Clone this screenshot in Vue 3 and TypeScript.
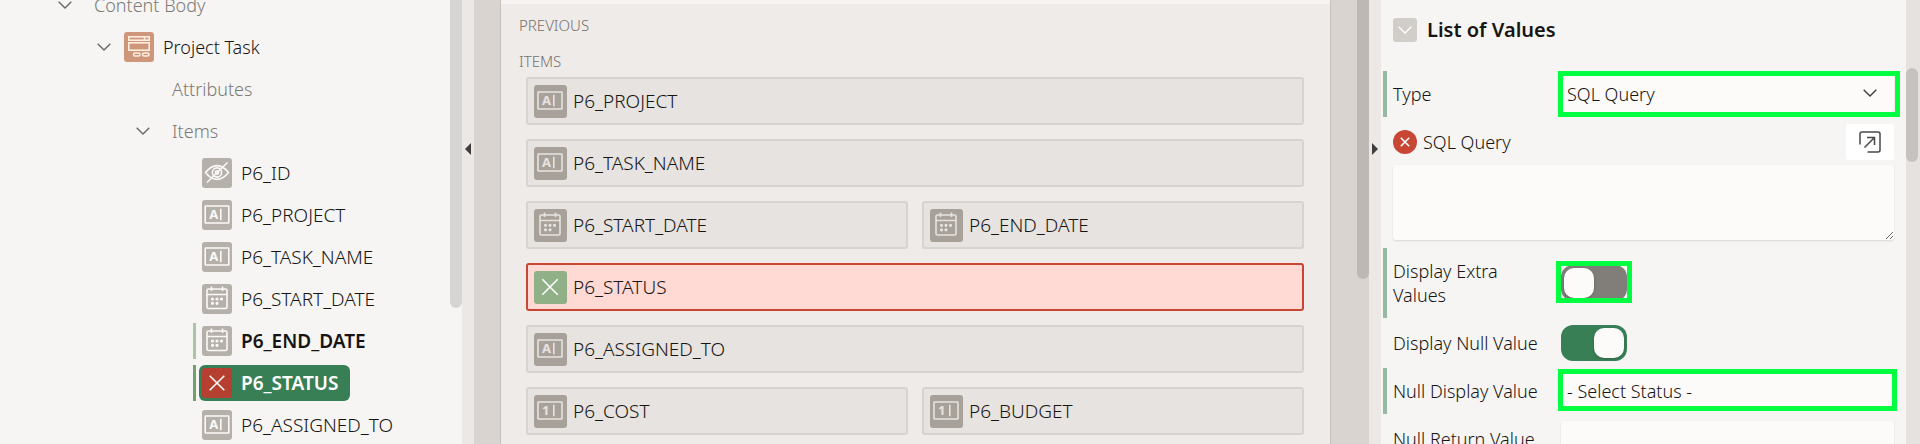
<script setup lang="ts">
import { ref } from 'vue'

type IconKind = 'region' | 'hidden' | 'text' | 'number' | 'date' | 'error'

interface TreeNode {
  label: string
  level: number
  icon?: IconKind
  open?: boolean
  changed?: boolean
  selected?: boolean
  muted?: boolean
}

interface LayoutItem {
  label: string
  icon: IconKind
  half?: boolean
  invalid?: boolean
}

const nodes: TreeNode[] = [
  { label: 'Content Body', level: 0, open: true, muted: true },
  { label: 'Project Task', level: 1, icon: 'region', open: true },
  { label: 'Attributes', level: 2, muted: true },
  { label: 'Items', level: 2, open: true, muted: true },
  { label: 'P6_ID', level: 3, icon: 'hidden' },
  { label: 'P6_PROJECT', level: 3, icon: 'text' },
  { label: 'P6_TASK_NAME', level: 3, icon: 'text' },
  { label: 'P6_START_DATE', level: 3, icon: 'date' },
  { label: 'P6_END_DATE', level: 3, icon: 'date', changed: true },
  { label: 'P6_STATUS', level: 3, icon: 'error', changed: true, selected: true },
  { label: 'P6_ASSIGNED_TO', level: 3, icon: 'text' },
]

const items: LayoutItem[] = [
  { label: 'P6_PROJECT', icon: 'text' },
  { label: 'P6_TASK_NAME', icon: 'text' },
  { label: 'P6_START_DATE', icon: 'date', half: true },
  { label: 'P6_END_DATE', icon: 'date', half: true },
  { label: 'P6_STATUS', icon: 'error', invalid: true },
  { label: 'P6_ASSIGNED_TO', icon: 'text' },
  { label: 'P6_COST', icon: 'number', half: true },
  { label: 'P6_BUDGET', icon: 'number', half: true },
]

const lovType = ref('SQL Query')
const sqlQuery = ref('')
const extraValues = ref(false)
const nullValue = ref(true)
const nullDisplay = ref('- Select Status -')
const nullReturn = ref('')
</script>

<template>
  <div class="designer">
    <nav class="pane tree-pane" aria-label="Rendering">
      <ul class="tree">
        <li
          v-for="n in nodes"
          :key="n.label"
          class="node"
          :class="[`level-${n.level}`, { muted: n.muted, changed: n.changed, selected: n.selected }]"
        >
          <span class="twist">
            <button v-if="n.open" type="button" class="twist-btn" :aria-label="`Collapse ${n.label}`">
              <svg viewBox="0 0 14 8" width="14" height="8"><path d="M.7.7 7 7 13.3.7" /></svg>
            </button>
          </span>
          <a href="#" class="entry" :class="{ plain: !n.icon }">
            <svg v-if="n.icon" class="badge" :class="n.icon" viewBox="0 0 30 30" aria-hidden="true">
              <g v-if="n.icon === 'region'" class="line">
                <rect x="4.8" y="4.8" width="20.4" height="3.4" />
                <path d="M20.5 5v3" />
                <rect x="4.8" y="10.8" width="20.4" height="7.4" />
                <rect x="9.5" y="21" width="6.5" height="3" rx="1.5" />
                <rect x="18.5" y="21" width="6.5" height="3" rx="1.5" />
              </g>
              <g v-else-if="n.icon === 'hidden'" class="line">
                <path d="M3.5 14.5Q9 7.6 15 7.6t11.5 6.9Q21 21.4 15 21.4T3.5 14.5Z" />
                <circle cx="15" cy="14.5" r="4.6" />
                <circle cx="15" cy="14.5" r="1.6" />
                <path d="M5 24.5 25.5 4.5" />
              </g>
              <g v-else-if="n.icon === 'date'" class="line">
                <rect x="5" y="5" width="20" height="19.5" rx="1.5" />
                <path d="M5 10.5h20M9.5 2.5V7M20.5 2.5V7" />
                <path class="dots" d="M10.5 15h0M15 15h0M19.5 15h0M10.5 19.3h0M15 19.3h0" />
              </g>
              <path v-else-if="n.icon === 'error'" class="line" d="M7.7 7.7 22.3 22.3M22.3 7.7 7.7 22.3" />
              <g v-else>
                <rect class="line" x="3.2" y="6" width="23.6" height="17" rx=".6" />
                <text x="7.2" y="19" class="glyph">{{ n.icon === 'number' ? '1' : 'A' }}</text>
                <path class="line" d="M18.8 8.8v11.4" />
              </g>
            </svg>
            <span>{{ n.label }}</span>
          </a>
        </li>
      </ul>
      <div class="bar"><div class="thumb"></div></div>
    </nav>

    <div class="splitter">
      <button type="button" class="collapse" aria-label="Collapse left pane">
        <svg viewBox="0 0 6 12" width="6" height="12"><path d="M6 0v12L0 6Z" /></svg>
      </button>
    </div>

    <main class="pane canvas">
      <section class="region">
        <h3 class="slot">PREVIOUS</h3>
        <h3 class="slot">ITEMS</h3>
        <div class="grid">
          <div
            v-for="i in items"
            :key="i.label"
            class="item"
            :class="{ half: i.half, invalid: i.invalid }"
          >
            <svg class="badge" :class="i.icon" viewBox="0 0 33 33" aria-hidden="true">
              <g v-if="i.icon === 'date'" class="line">
                <rect x="6" y="6" width="20" height="20" rx="1.5" />
                <path d="M6 11.5h20M10.5 3.5V8M21.5 3.5V8" />
                <path class="dots" d="M11.5 16.3h0M16 16.3h0M20.5 16.3h0M11.5 20.8h0M16 20.8h0" />
              </g>
              <path v-else-if="i.icon === 'error'" class="line" d="M8.3 8.3 23.7 23.7M23.7 8.3 8.3 23.7" />
              <g v-else>
                <rect class="line" x="4" y="7" width="24" height="17" rx=".6" />
                <text x="8" y="20" class="glyph">{{ i.icon === 'number' ? '1' : 'A' }}</text>
                <path class="line" d="M19.8 9.8v11.4" />
              </g>
            </svg>
            <span>{{ i.label }}</span>
          </div>
        </div>
      </section>
      <div class="bar"><div class="thumb"></div></div>
    </main>

    <div class="splitter">
      <button type="button" class="collapse" aria-label="Collapse right pane">
        <svg viewBox="0 0 6 12" width="6" height="12"><path d="M0 0v12l6-6Z" /></svg>
      </button>
    </div>

    <aside class="pane props">
      <form class="form" @submit.prevent>
        <header class="group">
          <button type="button" class="group-btn" aria-label="Collapse group">
            <svg viewBox="0 0 14 8" width="14" height="8"><path d="M.7.7 7 7 13.3.7" /></svg>
          </button>
          <h2>List of Values</h2>
        </header>

        <div class="row changed">
          <label for="type">Type</label>
          <div class="control marked mark-select">
            <select id="type" v-model="lovType" class="field">
              <option>SQL Query</option>
            </select>
            <svg class="arrow" viewBox="0 0 14 8" width="14" height="8" aria-hidden="true">
              <path d="M.7.7 7 7 13.3.7" />
            </svg>
          </div>
        </div>

        <div class="row">
          <svg class="alert" viewBox="0 0 24 24" width="24" height="24" aria-hidden="true">
            <circle cx="12" cy="12" r="12" />
            <path d="m7.8 7.8 8.4 8.4M16.2 7.8l-8.4 8.4" />
          </svg>
          <label for="sql" class="wide">SQL Query</label>
          <button type="button" class="expand" aria-label="Open code editor">
            <svg viewBox="0 0 22 22" width="22" height="22">
              <path d="M1 13.5V3a2 2 0 0 1 2-2h16a2 2 0 0 1 2 2v16a2 2 0 0 1-2 2H8.5M5.5 16.5 15.5 6.5M8 6.5h7.5V14" />
            </svg>
          </button>
        </div>
        <textarea id="sql" v-model="sqlQuery" class="field area"></textarea>

        <div class="row tall changed">
          <label for="extra">Display Extra Values</label>
          <div class="control marked mark-toggle">
            <input id="extra" v-model="extraValues" type="checkbox" role="switch" class="toggle" />
          </div>
        </div>

        <div class="row">
          <label for="nulls">Display Null Value</label>
          <div class="control">
            <input id="nulls" v-model="nullValue" type="checkbox" role="switch" class="toggle" />
          </div>
        </div>

        <div class="row changed">
          <label for="display">Null Display Value</label>
          <div class="control marked mark-input">
            <input id="display" v-model="nullDisplay" type="text" class="field" />
          </div>
        </div>

        <div class="row">
          <label for="return">Null Return Value</label>
          <div class="control">
            <input id="return" v-model="nullReturn" type="text" class="field" />
          </div>
        </div>
      </form>
      <div class="bar"><div class="thumb"></div></div>
    </aside>
  </div>
</template>

<style>
body {
  margin: 0;
  overflow: hidden;
}
</style>

<style scoped>
* {
  box-sizing: border-box;
}

.designer {
  display: flex;
  height: 100vh;
  overflow: hidden;
  background: #f6f5f3;
  color: #161513;
  font-family: "Noto Sans", "Open Sans", sans-serif;
  font-size: 18px;
  font-weight: 300;
  line-height: 24px;
}

button {
  padding: 0;
  border: 0;
  background: none;
  font: inherit;
}

svg {
  display: block;
  flex: none;
}

.pane {
  display: flex;
  overflow: hidden;
}

.bar {
  flex: none;
  width: 12px;
}

.thumb {
  width: 12px;
  border-radius: 6px;
  background: #d6d5d3;
}

/* Tree */
.tree-pane {
  flex: none;
  width: 462px;
}

.tree-pane .thumb {
  height: 308px;
  border-radius: 0 0 6px 6px;
}

.tree {
  flex: 1;
  margin: -16px 0 0;
  padding: 0;
  list-style: none;
}

.node {
  display: flex;
  align-items: center;
  height: 42px;
}

.level-0 { padding-left: 54px; }
.level-1 { padding-left: 93px; }
.level-2 { padding-left: 132px; }
.level-3 {
  padding-left: 171px;
  font-size: 19px;
}

.twist {
  display: flex;
  align-items: center;
  justify-content: flex-end;
  width: 25px;
  height: 36px;
  padding-right: 4px;
  border-right: 3px solid transparent;
}

.twist-btn svg,
.group-btn svg,
.arrow {
  fill: none;
  stroke: #6b6966;
  stroke-width: 1.4;
}

.changed > .twist {
  border-right-color: #a8c5a5;
}

.selected > .twist {
  border-right-color: #72a06c;
}

.entry {
  display: flex;
  align-items: center;
  gap: 9px;
  height: 36px;
  margin-left: 3px;
  padding: 0 12px 0 3px;
  border-radius: 6px;
  color: inherit;
  text-decoration: none;
}

.entry.plain {
  padding-left: 12px;
}

.muted {
  color: #7d7a77;
}

.changed .entry {
  font-weight: 600;
}

.selected .entry {
  background: #397f56;
  color: #fff;
}

.badge {
  width: 30px;
  height: 30px;
  border-radius: 3px;
  background: #b6b0ab;
}

.badge.region { background: #ce967b; }
.badge.error { background: #b53f31; }

.line {
  fill: none;
  stroke: #fbf9f8;
  stroke-width: 1.6;
}

.region > .line { stroke: #fdeedd; }

.dots {
  stroke-linecap: round;
  stroke-width: 3.2;
}

.glyph {
  fill: #fbf9f8;
  font-size: 13px;
  font-weight: 700;
}

/* Splitters */
.splitter {
  flex: none;
  width: 12px;
  padding: 143px 3px 0;
  background: #ece8e5;
}

.collapse {
  display: block;
  fill: #403e3c;
}

/* Layout canvas */
.canvas {
  flex: 1;
  min-width: 0;
  padding-left: 26px;
  background: #d9d4cf;
}

.canvas .thumb {
  height: 279px;
  border-radius: 0 0 6px 6px;
  background: #bdb8b4;
}

section.region {
  flex: 1;
  margin-right: 26px;
  padding: 7px 26px 8px 25px;
  border: solid #c6c1bc;
  border-width: 0 1px;
  background: linear-gradient(#f6f5f3 4px, #efebe8 4px);
}

.slot {
  height: 36px;
  margin: 0 0 0 -7px;
  color: #74716e;
  font-size: 15px;
  font-weight: 300;
  line-height: 36px;
}

.grid {
  display: grid;
  grid-template-columns: 1fr 1fr;
  gap: 14px;
  margin-top: -2px;
  font-size: 19px;
}

.item {
  display: flex;
  grid-column: span 2;
  align-items: center;
  gap: 6px;
  height: 48px;
  padding: 0 6px;
  border: 2px solid #d7d3cf;
  border-radius: 3px;
  background: #e6e3e0;
}

.item.half {
  grid-column: span 1;
}

.item.invalid {
  border-color: #c74634;
  background: #ffd9d3;
}

.item .badge {
  width: 33px;
  height: 33px;
  background: #a8a199;
}

.item .badge.error { background: #90b188; }
.item .line { stroke: #e6e3e0; }
.item .glyph { fill: #e6e3e0; }
.item .error .line { stroke: #fff; }

/* Property editor */
.props {
  flex: none;
  width: 539px;
}

.form {
  display: flex;
  flex: 1;
  flex-direction: column;
  gap: 2px;
  min-width: 0;
}

.props .bar {
  width: 14px;
  padding-top: 68px;
  background: #e6e2df;
}

.props .thumb {
  height: 94px;
  background: #c6c2bf;
}

.group {
  display: flex;
  flex: none;
  align-items: center;
  gap: 10px;
  height: 60px;
  margin-bottom: 9px;
  padding-left: 12px;
}

.group-btn {
  display: grid;
  place-items: center;
  width: 24px;
  height: 24px;
  border-radius: 3px;
  background: #d1cdc8;
}

.group-btn svg { stroke: #fff; }

h2 {
  margin: 0;
  font-size: 20px;
  font-weight: 600;
}

.row {
  display: flex;
  flex: none;
  align-items: center;
  height: 46px;
  margin-left: 2px;
  padding: 0 12px 0 6px;
  border-left: 4px solid transparent;
}

.row.changed {
  border-left-color: #97b9a3;
}

.row.tall {
  height: 70px;
  margin-top: 6px;
}

.row label {
  flex: none;
  width: 168px;
  padding-right: 16px;
}

.row label.wide {
  flex: 1;
  padding-left: 6px;
}

.alert {
  fill: #c74634;
}

.alert path {
  stroke: #fff;
  stroke-width: 1.6;
}

.expand {
  display: grid;
  place-items: center;
  width: 48px;
  height: 36px;
  border-radius: 3px;
  background: #fff;
}

.expand svg {
  fill: none;
  stroke: #4a4845;
  stroke-width: 1.5;
}

.control {
  position: relative;
  flex: 1;
  min-width: 0;
}

.field {
  display: block;
  width: 100%;
  height: 36px;
  margin: 0;
  padding: 0 6px;
  border: 0;
  border-radius: 3px;
  outline: 0;
  background: #fcfbfa;
  box-shadow: 0 1px 2px #0000001f;
  color: inherit;
  font: inherit;
  appearance: none;
}

.area {
  flex: none;
  width: auto;
  height: 75px;
  margin: -2px 12px 0;
  resize: vertical;
}

.arrow {
  position: absolute;
  top: 13px;
  right: 17px;
  stroke: #403e3c;
  pointer-events: none;
}

.toggle {
  display: block;
  width: 66px;
  height: 36px;
  margin: 0;
  padding: 3px;
  border-radius: 12px;
  background: #817d79;
  appearance: none;
}

.toggle::before {
  display: block;
  width: 30px;
  height: 30px;
  border-radius: 10px;
  background: #fcfbfa;
  box-shadow: 0 1px 3px #00000033;
  content: "";
}

.toggle:checked {
  background: #397f56;
}

.toggle:checked::before {
  margin-left: auto;
}

.marked::after {
  position: absolute;
  border: 5px solid #00ff40;
  content: "";
  pointer-events: none;
}

.mark-select::after { inset: -5px -6px -5px -3px; }
.mark-input::after { inset: -4px -3px -2px -3px; }
.mark-toggle { flex: none; }
.mark-toggle::after { inset: -4px -5px -2px -5px; }
</style>
